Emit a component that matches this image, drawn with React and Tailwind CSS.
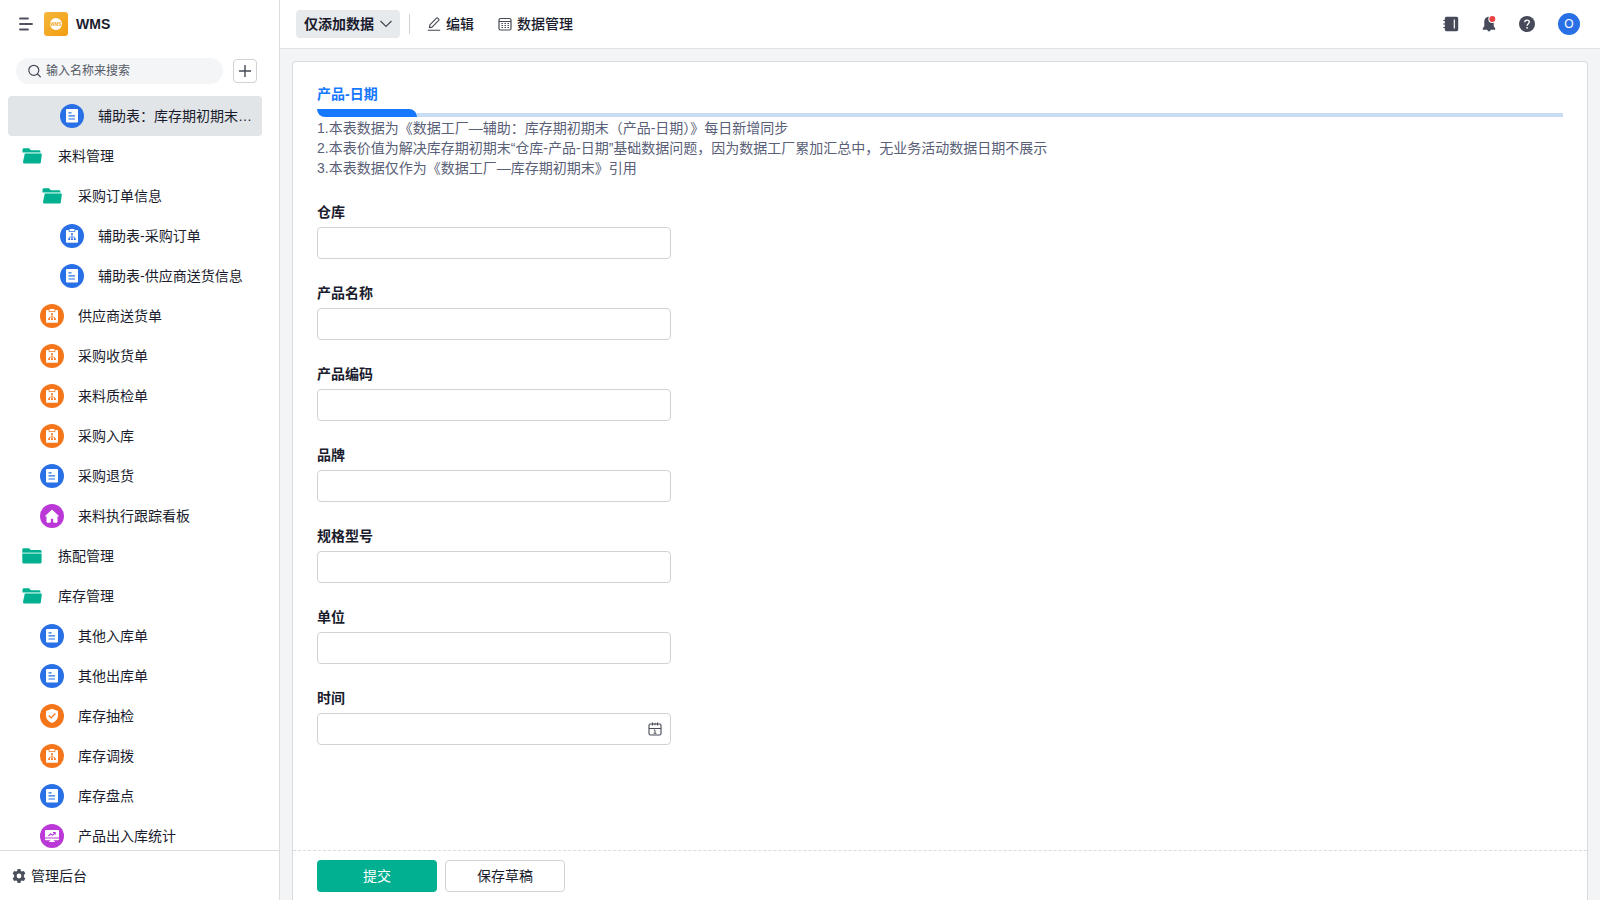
import { useState } from "react";

const menu = [
  { label: "辅助表：库存期初期末…", icon: "doc", color: "blue", level: 2 },
  { label: "来料管理", icon: "open", level: 0 },
  { label: "采购订单信息", icon: "open", level: 1 },
  { label: "辅助表-采购订单", icon: "flow", color: "blue", level: 2 },
  { label: "辅助表-供应商送货信息", icon: "doc", color: "blue", level: 2 },
  { label: "供应商送货单", icon: "flow", color: "orange", level: 1 },
  { label: "采购收货单", icon: "flow", color: "orange", level: 1 },
  { label: "来料质检单", icon: "flow", color: "orange", level: 1 },
  { label: "采购入库", icon: "flow", color: "orange", level: 1 },
  { label: "采购退货", icon: "doc", color: "blue", level: 1 },
  { label: "来料执行跟踪看板", icon: "home", color: "purple", level: 1 },
  { label: "拣配管理", icon: "closed", level: 0 },
  { label: "库存管理", icon: "open", level: 0 },
  { label: "其他入库单", icon: "doc", color: "blue", level: 1 },
  { label: "其他出库单", icon: "doc", color: "blue", level: 1 },
  { label: "库存抽检", icon: "shield", color: "orange", level: 1 },
  { label: "库存调拨", icon: "flow", color: "orange", level: 1 },
  { label: "库存盘点", icon: "doc", color: "blue", level: 1 },
  { label: "产品出入库统计", icon: "chart", color: "purple", level: 1 },
];

const fields = ["仓库", "产品名称", "产品编码", "品牌", "规格型号", "单位"];

const indents = ["pl-3", "pl-8", "pl-[52px]"];

const colors = {
  blue: "bg-[#2970e6] text-[#2970e6]",
  orange: "bg-[#f5761a] text-[#f5761a]",
  purple: "bg-[#ba38d6] text-[#ba38d6]",
};

function FolderIcon({ open }) {
  return (
    <svg className="w-5 h-4" viewBox="0 0 20 16">
      {open ? (
        <>
          <path fill="#00b090" d="M.5 12V1.8C.5.9 1.100.3 2 .3h4.600c.5 0 .9.2 1.200.6l1 1.300h8.200c.8 0 1.400.6 1.400 1.400v1H.5z" />
          <path fill="#8fe3d2" d="M2.600 4.600h16.600v1.300H3.400L1.600 14.500H.9z" />
          <path fill="#00b090" d="M3.900 5.700h15c.6 0 1 .5.900 1.100l-1 7.600c-.1.700-.6 1.100-1.300 1.100H2.200c-.8 0-1.200-.7-1.100-1.500l1.600-7.300c.1-.6.600-1 1.200-1z" />
        </>
      ) : (
        <>
          <path fill="#00b090" d="M.3 4.700V1.800C.3.9.9.3 1.800.3h4.800c.5 0 .9.2 1.200.6l1 1.200h9.300c.9 0 1.500.6 1.500 1.500v1.100z" />
          <path fill="#8fe3d2" d="M.3 4.700h19.300v1.100H.3z" />
          <path fill="#00b090" d="M.3 5.800h19.300V14c0 .9-.6 1.500-1.500 1.500H1.800c-.9 0-1.500-.6-1.500-1.500z" />
        </>
      )}
    </svg>
  );
}

// white glyph with cut-outs in the circle's own colour
function Glyph({ name }) {
  return (
    <svg className="w-6 h-6" viewBox="0 0 24 24" fill="none">
      {name === "doc" && (
        <>
          <rect x="6" y="5" width="12" height="13.500" rx="1" fill="#fff" />
          <path stroke="currentColor" strokeWidth="1.200" d="M8.500 8.800h3M8.500 11.900h6.500M8.500 15h6.500" />
        </>
      )}
      {name === "flow" && (
        <>
          <path fill="#fff" d="M7 6h1.700v1.700h6.600V6H17c.6 0 1 .4 1 1v10.800c0 .6-.4 1-1 1H7c-.6 0-1-.4-1-1V7c0-.6.4-1 1-1z" />
          <rect x="9.500" y="5" width="5" height="1.900" rx=".5" fill="#fff" />
          <path fill="currentColor" d="M11.100 9.300h1.800v1.800h-1.800zM8.200 14.300H10v1.800H8.200zM11.100 14.300h1.800v1.800h-1.800zM14 14.300h1.800v1.800H14z" />
          <path stroke="currentColor" strokeWidth=".7" d="M12 11v3.500M9.100 14.500l.6-1.500h4.600l.6 1.500" />
        </>
      )}
      {name === "home" && (
        <path fill="#fff" stroke="#fff" strokeLinejoin="round" d="M12 6l6.400 6H17v6.200h-3.300v-4h-3.400v4H7V12H5.600z" />
      )}
      {name === "shield" && (
        <>
          <path fill="#fff" d="M12 4.800l6 2.100v4.800c0 3.300-2.300 5.800-6 7.400-3.700-1.600-6-4.100-6-7.400V6.900z" />
          <path stroke="currentColor" strokeWidth="1.300" d="M8.800 11.500l2.400 2.400 4.200-4.400" />
        </>
      )}
      {name === "chart" && (
        <>
          <path fill="#fff" d="M6 6h12c.6 0 1 .4 1 1v6.600H5V7c0-.6.4-1 1-1zM5 14.500h14v.7c0 .6-.4 1-1 1h-4.200v1H15v.8H9v-.8h1.200v-1H6c-.6 0-1-.4-1-1z" />
          <path stroke="currentColor" strokeWidth="1.100" d="M8.500 12l2.300-2.200 1.700 1.500L15 8.600M13 8.500h2.200v2.200" />
        </>
      )}
    </svg>
  );
}

function MenuItem({ item, active, onClick }) {
  const folder = item.icon === "open" || item.icon === "closed";
  return (
    <button
      onClick={onClick}
      className={`flex w-full h-10 shrink-0 items-center gap-3.5 rounded pr-2 text-left text-sm ${indents[item.level]} ${active ? "bg-[#e1e5e8]" : ""}`}
    >
      {folder ? (
        <span className="flex w-6 shrink-0 justify-center"><FolderIcon open={item.icon === "open"} /></span>
      ) : (
        <span className={`size-6 shrink-0 rounded-full ${colors[item.color]}`}><Glyph name={item.icon} /></span>
      )}
      <span className="whitespace-nowrap">{item.label}</span>
    </button>
  );
}

function Sidebar() {
  const [active, setActive] = useState(0);

  return (
    <aside className="flex w-[280px] shrink-0 flex-col border-r border-[#dcdfe2] bg-white">
      <div className="flex h-12 shrink-0 items-center pl-[18px]">
        <button aria-label="菜单">
          <svg className="w-4 h-4" viewBox="0 0 16 16" stroke="#50535f" strokeWidth="1.800" strokeLinecap="round">
            <path d="M2 2.500h8M2 8h12M2 13.500h8" />
          </svg>
        </button>
        <svg className="ml-2.5 size-6" viewBox="0 0 24 24">
          <defs>
            <linearGradient id="logo" x1="0" y1="0" x2="1" y2="1">
              <stop offset="0" stopColor="#f5b73b" />
              <stop offset="1" stopColor="#f29d0e" />
            </linearGradient>
          </defs>
          <rect width="24" height="24" rx="3" fill="url(#logo)" />
          <circle cx="12" cy="12" r="6" fill="#fff" />
          <text x="12" y="13.600" textAnchor="middle" fontSize="4.500" fontWeight="700" fill="#f3a623">WMS</text>
        </svg>
        <h1 className="ml-2 text-sm font-bold">WMS</h1>
      </div>

      <div className="flex shrink-0 items-center gap-2.5 pt-2.5 pb-3 pl-4 pr-[22px]">
        <label className="flex h-[26px] min-w-0 flex-1 items-center gap-1 rounded-full bg-[#f3f5f6] pl-3 pr-3">
          <svg className="size-3.5 shrink-0" viewBox="0 0 14 14" fill="none" stroke="#454955" strokeWidth="1.200" strokeLinecap="round">
            <circle cx="5.800" cy="6.300" r="5" />
            <path d="M9.600 10l2.800 2.800" />
          </svg>
          <input aria-label="搜索" placeholder="输入名称来搜索" className="w-full min-w-0 bg-transparent text-xs outline-none placeholder:text-[#555965]" />
        </label>
        <button aria-label="新建" className="flex size-6 items-center justify-center rounded border border-[#cfd3d7]">
          <svg className="size-3" viewBox="0 0 12 12" stroke="#454955" strokeWidth="1.400"><path d="M6 0v12M0 6h12" /></svg>
        </button>
      </div>

      <nav className="flex min-h-0 flex-1 flex-col overflow-y-auto pl-2 pr-[17px] [scrollbar-width:none]">
        {menu.map((item, i) => (
          <MenuItem key={item.label} item={item} active={i === active} onClick={() => setActive(i)} />
        ))}
      </nav>

      <button className="flex h-[50px] shrink-0 items-center gap-[5px] border-t border-[#dcdfe2] pl-3 text-sm">
        <svg className="size-3.5" viewBox="0 0 14 14">
          <path fill="#4b4f5b" fillRule="evenodd" d="M5.600 0h2.800l.5 1.900 1.100.6 1.900-.6 1.400 2.500L11.900 6v2l1.400 1.500-1.400 2.500-1.900-.5-1.100.6-.5 1.900H5.600l-.5-1.900-1.100-.6-1.900.5L.7 9.500 2.100 8V6L.7 4.400l1.400-2.500 1.900.6 1.100-.6zM7 4.600a2.400 2.400 0 100 4.800 2.400 2.400 0 000-4.800z" />
        </svg>
        管理后台
      </button>
    </aside>
  );
}

function Header() {
  return (
    <header className="flex h-[49px] shrink-0 items-center border-b border-[#dfe2e5] bg-white pl-4 pr-5 text-sm">
      <button className="flex h-7 items-center gap-[5px] rounded bg-[#e7eaed] pl-2 pr-[7px] font-bold">
        仅添加数据
        <svg className="w-3.5 h-2" viewBox="0 0 14 8" fill="none" stroke="#454955" strokeWidth="1.200"><path d="M1.500 1L7 6.500 12.500 1" /></svg>
      </button>
      <span className="ml-[9px] h-5 w-px bg-[#cfd3d7]" />
      <button className="ml-[17px] flex items-center gap-[5px] font-medium">
        <svg className="size-3.5" viewBox="0 0 14 14" fill="none" stroke="#454955" strokeWidth="1.100" strokeLinejoin="round">
          <path d="M.8 13.200h12.400M2.400 10.600l.5-2.700L9.500 1.200c.4-.4.9-.4 1.300 0l.9.9c.4.4.4.9 0 1.300L5.100 10.100z" />
        </svg>
        编辑
      </button>
      <button className="ml-6 flex items-center gap-[5px] font-medium">
        <svg className="size-3.5" viewBox="0 0 14 14" fill="none" stroke="#454955">
          <rect x="1" y="1.500" width="12" height="11.500" rx="1.500" strokeWidth="1.200" />
          <path d="M1 4.500h12" />
          <path strokeDasharray="1.500 1.500" d="M3.500 6.500h8M3.500 8.500h8M3.500 10.500h8" />
        </svg>
        数据管理
      </button>

      <div className="ml-auto flex items-center">
        <button aria-label="通讯录">
          <svg className="size-4" viewBox="0 0 16 16">
            <path fill="#464a59" d="M3.500.8h10c1.100 0 1.700.7 1.700 1.700v11c0 1.100-.6 1.700-1.700 1.700h-10c-1 0-1.700-.6-1.700-1.700v-11C1.800 1.500 2.500.8 3.500.8z" />
            <path stroke="#464a59" strokeWidth="1.200" d="M.3 4.500H3M.3 8H3M.3 11.500H3" />
            <path stroke="#fff" strokeWidth="1.200" d="M11.300 3.500v9" />
          </svg>
        </button>
        <button aria-label="消息" className="ml-[22px]">
          <svg className="size-4" viewBox="0 0 16 16">
            <path fill="#464a59" d="M8 .8c3 0 4.700 2.200 4.700 5v4.500l1.500 1.900v1.600H9.700c-.2 1-.8 1.700-1.700 1.700s-1.500-.7-1.700-1.700H1.800v-1.600l1.500-1.900V5.800C3.300 3 5 .8 8 .8z" />
            <circle cx="11.300" cy="3" r="4" fill="#fff" />
            <circle cx="11.300" cy="3" r="3" fill="#ea4343" />
          </svg>
        </button>
        <button aria-label="帮助" className="ml-[22px]">
          <svg className="size-4" viewBox="0 0 16 16" fill="none">
            <circle cx="8" cy="8" r="8" fill="#464a59" />
            <path stroke="#fff" strokeWidth="1.400" d="M5.700 6.300c0-1.300 1-2.200 2.300-2.200s2.300.8 2.300 2c0 1.600-2.200 1.700-2.200 3.600" />
            <circle cx="8.100" cy="11.800" r=".9" fill="#fff" />
          </svg>
        </button>
        <button aria-label="账号" className="ml-[23px] flex size-[22px] items-center justify-center rounded-full bg-[#2970e6] text-xs text-white">O</button>
      </div>
    </header>
  );
}

export default function App() {
  return (
    <div className="flex h-screen bg-[#f2f4f6] font-['Liberation_Sans','Noto_Sans_CJK_SC',sans-serif] text-[#1a1c2e]">
      <Sidebar />
      <div className="flex min-w-0 flex-1 flex-col">
        <Header />
        <main className="mx-3 mt-3 flex min-h-0 flex-1 flex-col rounded-t border border-b-0 border-[#d9dcdf] bg-white">
          <div className="min-h-0 flex-1 overflow-y-auto px-6 pt-[22px] [scrollbar-width:none]">
            <h2 className="text-sm font-bold leading-5 text-[#1677ff]">产品-日期</h2>
            <div className="mt-[5px] flex items-end">
              <span className="h-2 w-[100px] rounded-tr-lg rounded-bl-lg bg-[#1677ff]" />
              <span className="h-1 flex-1 bg-[#c8ddf4]" />
            </div>
            <div className="pt-px text-sm leading-5 text-[#596078]">
              <p>1.本表数据为《数据工厂—辅助：库存期初期末（产品-日期）》每日新增同步</p>
              <p>2.本表价值为解决库存期初期末“仓库-产品-日期”基础数据问题，因为数据工厂累加汇总中，无业务活动数据日期不展示</p>
              <p>3.本表数据仅作为《数据工厂—库存期初期末》引用</p>
            </div>

            <form id="record" className="mt-6 flex w-[354px] flex-col gap-6">
              {fields.map((name) => (
                <label key={name} className="flex flex-col gap-[5px] text-sm font-bold leading-5">
                  {name}
                  <input className="h-8 rounded border border-[#cfd3d7] px-2 font-normal outline-none" />
                </label>
              ))}
              <label className="flex flex-col gap-[5px] text-sm font-bold leading-5">
                时间
                <span className="flex h-8 items-center rounded border border-[#cfd3d7] px-2">
                  <input className="min-w-0 flex-1 font-normal outline-none" />
                  <svg className="size-3.5" viewBox="0 0 14 14" fill="none" stroke="#454955" strokeWidth="1.100">
                    <rect x="1" y="2" width="12" height="11" rx="1.500" />
                    <path d="M1 6.500h12M4.500.5v3M9.500.5v3" />
                    <path strokeWidth=".9" d="M5.800 8H7v3.300M5.600 11.300h2.800M7 .8v2.500" />
                  </svg>
                </span>
              </label>
            </form>
          </div>

          <footer className="flex h-[50px] shrink-0 items-center gap-2 border-t border-dashed border-[#d9dcdf] px-6 text-sm">
            <button form="record" className="h-8 w-[120px] rounded bg-[#00b090] text-white">提交</button>
            <button type="button" className="h-8 w-[120px] rounded border border-[#cfd3d7] bg-white">保存草稿</button>
          </footer>
        </main>
      </div>
    </div>
  );
}
